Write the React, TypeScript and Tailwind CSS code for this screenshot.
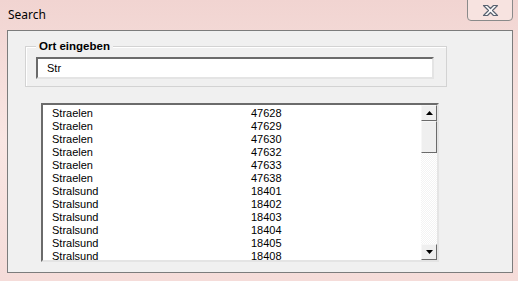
import React from 'react';

const rows: [string, string][] = [
  ['Straelen', '47628'],
  ['Straelen', '47629'],
  ['Straelen', '47630'],
  ['Straelen', '47632'],
  ['Straelen', '47633'],
  ['Straelen', '47638'],
  ['Stralsund', '18401'],
  ['Stralsund', '18402'],
  ['Stralsund', '18403'],
  ['Stralsund', '18404'],
  ['Stralsund', '18405'],
  ['Stralsund', '18408']
];

const sunken =
  'border-2 border-t-[#6b6b6b] border-l-[#6b6b6b] border-r-[#e4e4e4] border-b-[#e4e4e4]';

function CloseGlyph() {
  return (
    <svg width="17" height="13" viewBox="0 0 17 13">
      <path
        d="M1.5 1.5h4l3 3 3-3h4l-5 5 5 5h-4l-3-3-3 3h-4l5-5z"
        fill="#ffffff"
        stroke="#596270"
        strokeWidth="1.2"
        strokeLinejoin="round"
      />
    </svg>
  );
}

function ScrollButton({up}: {up: boolean}) {
  return (
    <div className="flex h-[16px] w-[16px] items-center justify-center border border-b-[#6b6b6b] border-r-[#6b6b6b] border-l-[#f7f7f7] border-t-[#f7f7f7] bg-[#efefef]">
      <svg width="7" height="4" viewBox="0 0 7 4">
        <path d={up ? 'M0 4h7L3.5 0z' : 'M0 0h7L3.5 4z'} fill="#000" />
      </svg>
    </div>
  );
}

export default function App() {
  return (
    <div className="relative h-[281px] w-[518px] overflow-hidden bg-gradient-to-b from-[#f1d4d1] via-[#f9e6e3] to-[#f5dcd9] font-['Liberation_Sans',Arial,sans-serif] text-[11px] text-black">
      <div className="flex h-[30px] items-center pl-[8px] font-['Noto_Sans',sans-serif] text-[12px] text-black">
        Search
      </div>
      <div className="absolute right-[5px] top-[-1px] flex h-[22px] w-[46px] items-center justify-center rounded-b-[4px] border border-[#8a8a8a] bg-[#f7e3e0]">
        <CloseGlyph />
      </div>

      <div className="ml-[7px] h-[243px] w-[506px] border border-[#7c7c7c] bg-[#f0f0f0] pl-[17px] pt-[15px]">
        <div className="relative h-[41px] w-[422px] border border-[#d3d3d3] shadow-[inset_1px_1px_0_#ffffff]">
          <span className="absolute left-[10px] top-[-8px] bg-[#f0f0f0] px-[3px] text-[11.5px] font-bold leading-[14px]">
            Ort eingeben
          </span>
          <div className={`ml-[10px] mt-[10px] flex h-[22px] w-[398px] items-center bg-white pl-[9px] ${sunken}`}>
            Str
          </div>
        </div>

        <div className={`ml-[16px] mt-[16px] flex h-[159px] w-[398px] bg-white ${sunken}`}>
          <div className="flex-1 pl-[9px] pt-[2px]">
            {rows.map(([city, zip]) => (
              <div key={zip} className="flex h-[13px] items-center leading-[13px]">
                <span className="w-[199px]">{city}</span>
                <span>{zip}</span>
              </div>
            ))}
          </div>
          <div className="flex w-[16px] flex-col bg-[repeating-conic-gradient(#f3f3f3_0_25%,#ffffff_0_50%)] bg-[length:2px_2px]">
            <ScrollButton up />
            <div className="h-[32px] w-[16px] border border-b-[#6b6b6b] border-r-[#6b6b6b] border-l-[#f7f7f7] border-t-[#f7f7f7] bg-[#efefef]" />
            <div className="flex-1" />
            <ScrollButton up={false} />
          </div>
        </div>
      </div>
    </div>
  );
}
